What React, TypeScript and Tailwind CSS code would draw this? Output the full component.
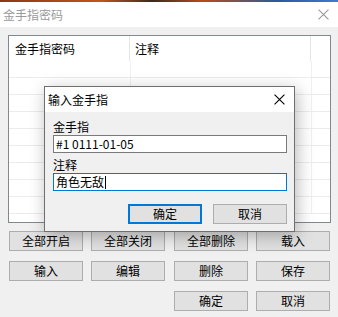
import React from "react";

const font = { fontFamily: '"Noto Sans CJK SC", "Noto Sans", sans-serif' };

function Btn({ children, primary = false, className = "" }: { children: React.ReactNode; primary?: boolean; className?: string }) {
  return (
    <div
      className={
        "w-[74px] h-[20px] flex items-center justify-center bg-[#e1e1e1] text-[12px] leading-none text-black " +
        (primary ? "border-2 border-[#0078d7] " : "border border-[#adadad] ") +
        className
      }
    >
      {children}
    </div>
  );
}

function XIcon({ color, size }: { color: string; size: number }) {
  return (
    <svg width={size} height={size} viewBox="0 0 10 10">
      <path d="M0.5 0.5 L9.5 9.5 M9.5 0.5 L0.5 9.5" stroke={color} strokeWidth="1" fill="none" />
    </svg>
  );
}

export default function App() {
  const rows = Array.from({ length: 9 });
  return (
    <div className="relative w-[338px] h-[317px] overflow-hidden bg-[#f0f0f0]" style={font}>
      {/* desktop strip */}
      <div className="h-[2px] w-full bg-[linear-gradient(90deg,#8a3a12_0%,#c0561c_30%,#3a2a22_45%,#b84c18_60%,#2a5a9a_82%,#3d7ad0_100%)]" />
      {/* title bar */}
      <div className="h-[25px] bg-white flex items-center justify-between pl-[3px] pr-[9px]">
        <span className="text-[12px] text-[#9a9a9a] leading-none">金手指密码</span>
        <XIcon color="#9a9a9a" size={11} />
      </div>
      {/* list box */}
      <div className="ml-[8px] mt-[8px] w-[323px] h-[188px] border border-[#828790] bg-white flex flex-col">
        <div className="flex h-[25px] shrink-0 text-[12px] text-black">
          <div className="w-[121px] border-r border-[#e5e5e5] pl-[6px] flex items-center">金手指密码</div>
          <div className="w-[181px] border-r border-[#e5e5e5] pl-[5px] flex items-center">注释</div>
          <div className="flex-1" />
        </div>
        {rows.map((_, i) => (
          <div key={i} className="flex h-[17px] shrink-0 border-b border-[#ececec]">
            <div className="w-[122px] border-r border-[#f0f0f0]" />
            <div className="w-[181px] border-r border-[#f0f0f0]" />
            <div className="flex-1" />
          </div>
        ))}
      </div>
      {/* button grid */}
      <div className="ml-[9px] mt-[8px] flex flex-col gap-[10px]">
        <div className="flex">
          <Btn>全部开启</Btn>
          <Btn className="ml-[8px]">全部关闭</Btn>
          <Btn className="ml-[9px]">全部删除</Btn>
          <Btn className="ml-[8px]">载入</Btn>
        </div>
        <div className="flex">
          <Btn>输入</Btn>
          <Btn className="ml-[8px]">编辑</Btn>
          <Btn className="ml-[9px]">删除</Btn>
          <Btn className="ml-[8px]">保存</Btn>
        </div>
        <div className="flex">
          <div className="w-[74px]" />
          <div className="w-[74px] ml-[8px]" />
          <Btn className="ml-[9px]">确定</Btn>
          <Btn className="ml-[8px]">取消</Btn>
        </div>
      </div>

      {/* modal dialog */}
      <div className="absolute left-[44px] top-[86px] w-[251px] h-[146px] border border-[#6f6f6f] bg-[#f0f0f0] shadow-[2px_4px_16px_rgba(0,0,0,0.28)] flex flex-col">
        <div className="h-[25px] bg-white flex items-center justify-between pl-[3px] pr-[9px] shrink-0">
          <span className="text-[12px] text-black leading-none">输入金手指</span>
          <XIcon color="#000000" size={11} />
        </div>
        <div className="pl-[8px] pr-[7px] flex flex-col">
          <div className="h-[23px] flex items-end text-[12px] leading-none text-black pb-[2px]">金手指</div>
          <div className="h-[18px] border border-[#7a7a7a] bg-white flex items-center pl-[2px] text-[12px] leading-none text-black">
            #1 0111-01-05
          </div>
          <div className="h-[20px] flex items-end text-[12px] leading-none text-black pb-[2px]">注释</div>
          <div className="h-[18px] border border-[#0078d7] bg-white flex items-center pl-[2px] text-[12px] leading-none text-black">
            角色无敌<span className="inline-block w-px h-[13px] bg-black ml-[1px]" />
          </div>
          <div className="flex justify-end mt-[13px]">
            <Btn primary className="w-[73px]">确定</Btn>
            <Btn className="ml-[11px] w-[74px]">取消</Btn>
          </div>
        </div>
      </div>
    </div>
  );
}
